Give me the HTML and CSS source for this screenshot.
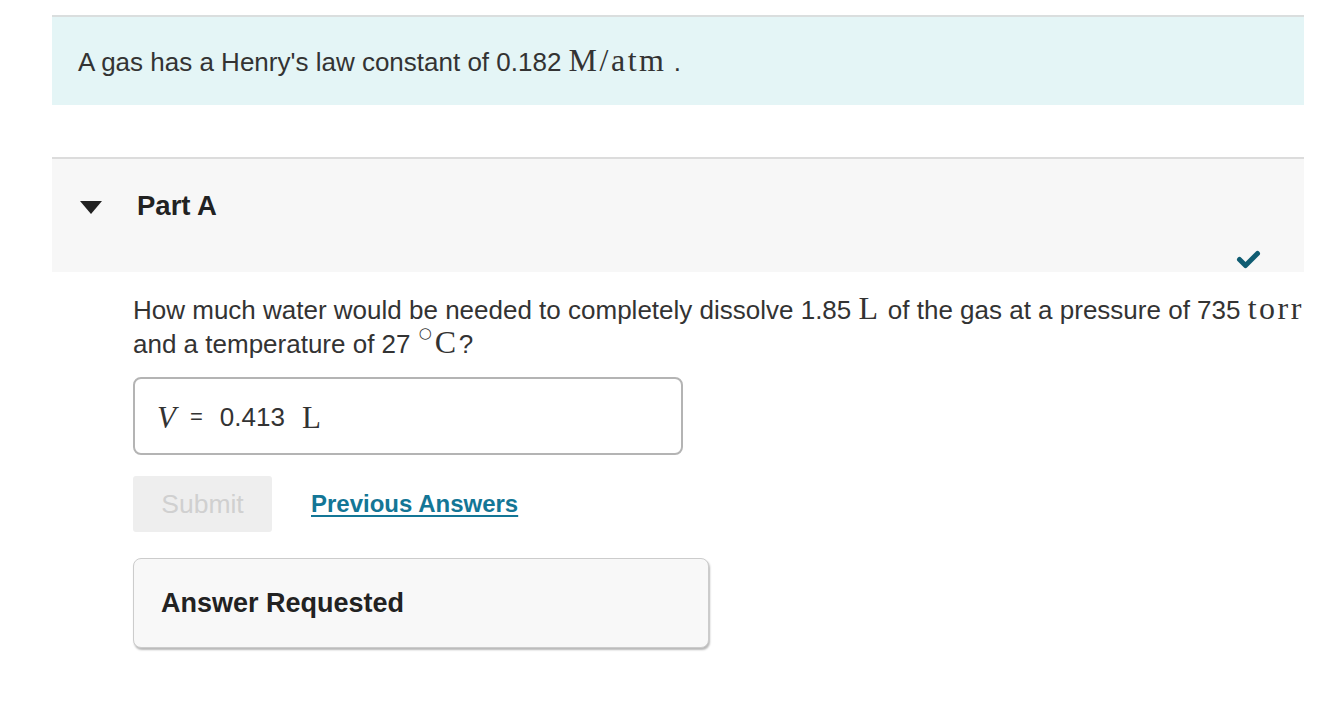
FILE: index.html
```html
<!DOCTYPE html>
<html>
<head>
<meta charset="utf-8">
<link rel="stylesheet" href="styles.css">
</head>
<body>
<div class="page">
  <div class="intro">
    <p>A gas has a Henry's law constant of 0.182 <span class="math">M/atm</span> .</p>
  </div>
  <div class="part">
    <div class="part-head">
      <span class="caret"></span>
      <h2>Part A</h2>
    </div>
    <div class="status-row">
      <svg class="check" width="26" height="22" viewBox="0 0 26 22"><path d="M3.5 10.5 L9.5 16.5 L21.5 4.5" fill="none" stroke="#0f5c72" stroke-width="5" stroke-linecap="round" stroke-linejoin="round"/></svg>
    </div>
  </div>
  <div class="part-body">
    <p class="question">How much water would be needed to completely dissolve 1.85 <span class="math">L</span> of the gas at a pressure of 735 <span class="math">torr</span> and a temperature of 27 <span class="math"><span class="deg">○</span>C</span>?</p>
    <div class="answer-box">
      <span class="math var">V</span><span class="eq">=</span><span class="val">0.413</span><span class="math unit">L</span>
    </div>
    <div class="actions">
      <button class="submit" disabled>Submit</button>
      <a class="prev" href="#">Previous Answers</a>
    </div>
    <div class="requested">Answer Requested</div>
  </div>
</div>
</body>
</html>
```
FILE: styles.css
```css
* { box-sizing: border-box; }
html, body { margin: 0; padding: 0; background: #fff; }
body {
  font-family: "Liberation Sans", Arial, Helvetica, sans-serif;
  color: #333;
}
.page {
  padding: 15px 27px 40px 52px;
}
.intro {
  background: #e4f5f6;
  border-top: 2px solid #dadede;
  height: 90px;
  padding: 0 26px;
  display: flex;
  align-items: center;
}
.intro p {
  margin: 0;
  font-size: 26px;
}
.math {
  font-family: "Liberation Serif", "Times New Roman", serif;
  font-size: 32px;
  line-height: 1;
  letter-spacing: 2.5px;
}
.math .deg {
  font-family: "DejaVu Sans", sans-serif;
  font-size: 15px;
  vertical-align: 15px;
  line-height: 0;
  margin-right: 3px;
  margin-left: 1px;
  letter-spacing: 0;
}
.part {
  margin-top: 52px;
  background: #f7f7f7;
  border-top: 2px solid #dcdcdc;
  height: 115px;
  display: flex;
  flex-direction: column;
}
.part-head {
  display: flex;
  align-items: center;
  height: 94px;
  padding-left: 28px;
}
.caret {
  width: 0; height: 0;
  border-left: 11.5px solid transparent;
  border-right: 11.5px solid transparent;
  border-top: 13px solid #222;
  margin-right: 35px;
  margin-top: 2px;
}
.part-head h2 {
  margin: 0;
  font-size: 27.5px;
  font-weight: bold;
  color: #222;
}
.status-row {
  display: flex;
  justify-content: flex-end;
  padding-right: 42px;
  margin-top: -4px;
}
.check { display: block; }
.part-body {
  padding-left: 81px;
}
.question {
  margin: 20px 0 0;
  font-size: 26px;
  line-height: 32px;
  color: #333;
}
.answer-box {
  margin-top: 17px;
  width: 550px;
  height: 78px;
  border: 2px solid #b4b4b4;
  border-radius: 8px;
  display: flex;
  align-items: center;
  padding-left: 22px;
  padding-top: 2px;
}
.var { font-style: italic; font-size: 31px; letter-spacing: 0; }
.eq { font-size: 22px; margin: 0 17px 0 14px; }
.val { font-size: 26px; }
.unit { font-size: 31px; margin-left: 17px; letter-spacing: 0; }
.actions {
  margin-top: 21px;
  display: flex;
  align-items: center;
}
.submit {
  width: 139px;
  height: 56px;
  background: #eeeeee;
  border: none;
  border-radius: 3px;
  font-family: "Liberation Sans", Arial, sans-serif;
  font-size: 26.5px;
  color: #d0d0d0;
  padding: 0;
}
.prev {
  margin-left: 39px;
  font-size: 24px;
  font-weight: bold;
  color: #137696;
  text-decoration: underline;
  text-decoration-thickness: 2px;
  text-underline-offset: 3px;
}
.requested {
  margin-top: 26px;
  width: 576px;
  height: 90px;
  background: #f8f8f8;
  border: 1px solid #cccccc;
  border-radius: 8px;
  box-shadow: 1px 2px 2px rgba(0,0,0,0.28);
  display: flex;
  align-items: center;
  padding-left: 27px;
  font-size: 27px;
  font-weight: bold;
  color: #222;
}
```
